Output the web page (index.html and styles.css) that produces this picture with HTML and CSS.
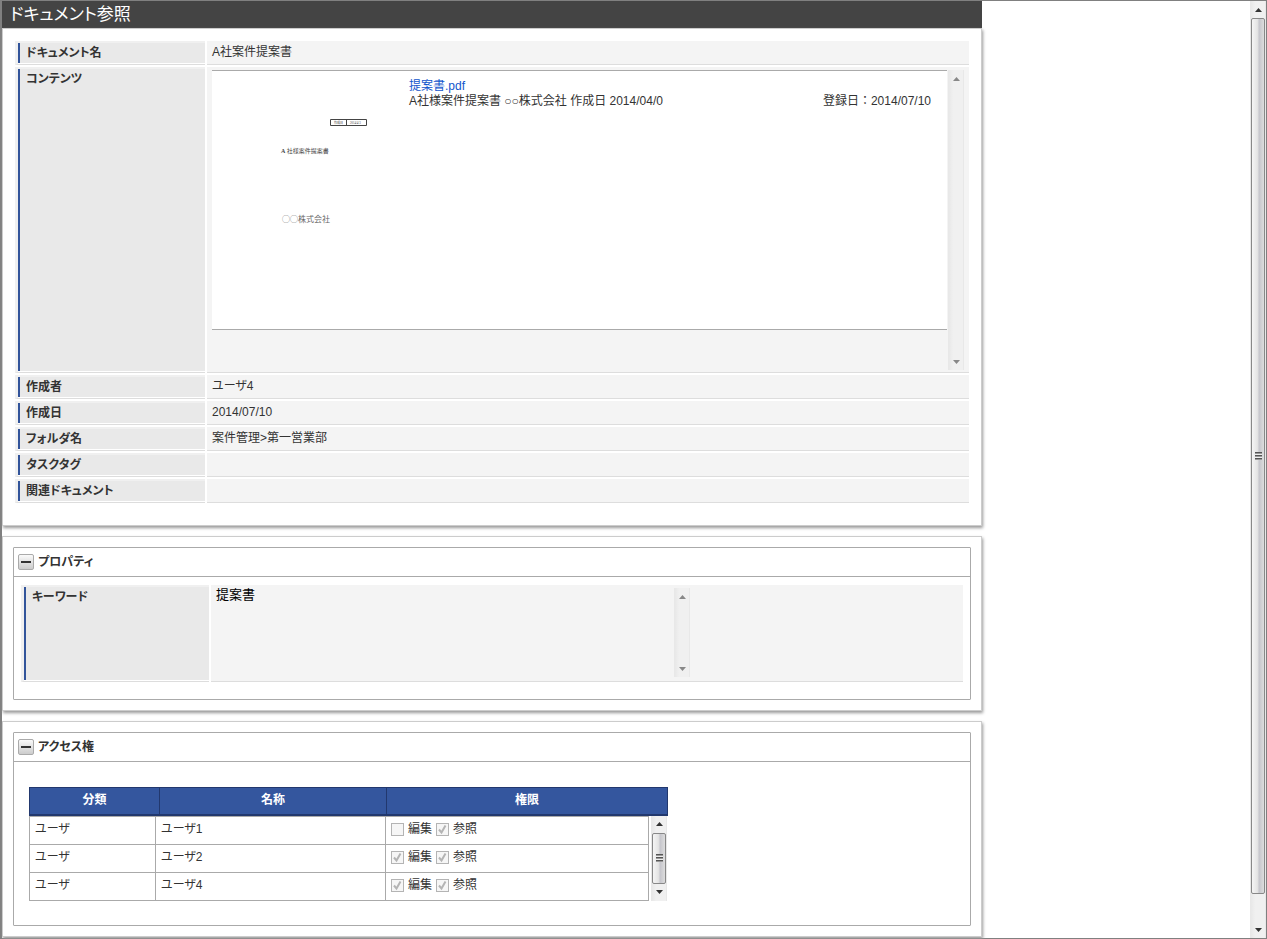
FILE: index.html
```
<!DOCTYPE html>
<html lang="ja">

<head>
    <meta charset="UTF-8">
    <meta name="viewport" content="width=device-width, initial-scale=1.0">
    <title>ドキュメント参照</title>
    <link rel="stylesheet" href="styles.css">
</head>

<body>
    <div class="window">
        <main class="page">
            <h1 class="page-title">ドキュメント参照</h1>

            <section class="card card-main">
                <table class="form-table">
                    <tr>
                        <th scope="row">ドキュメント名</th>
                        <td>A社案件提案書</td>
                    </tr>
                    <tr>
                        <th scope="row">コンテンツ</th>
                        <td class="pane-cell">
                            <div class="pane">
                                <div class="document">
                                    <svg class="thumb" viewBox="0 0 197 256" role="img" aria-label="提案書.pdf">
                                        <path d="M118.500 48.500h36v6h-36zM134.500 48.500v6" fill="none" stroke="#444" />
                                        <text x="122" y="53" font-size="3">作成日</text>
                                        <text x="138" y="53" font-size="3">2014/4/3</text>
                                        <text x="69" y="82" font-size="6"><tspan font-weight="bold">A</tspan> 社様案件提案書</text>
                                        <text class="thumb-company" x="70" y="151" font-size="8">◯◯株式会社</text>
                                    </svg>
                                    <div class="document-info">
                                        <a href="#">提案書.pdf</a>
                                        <div class="document-line">
                                            <span>A社様案件提案書 ○○株式会社 作成日 2014/04/0</span>
                                            <span class="document-date">登録日：2014/07/10</span>
                                        </div>
                                    </div>
                                </div>
                                <div class="scrollbar scrollbar-off">
                                    <button type="button" disabled aria-label="上へ"><svg viewBox="0 0 7 4"><path d="M3.500 0L7 4H0z" /></svg></button>
                                    <div class="track"></div>
                                    <button type="button" disabled aria-label="下へ"><svg viewBox="0 0 7 4"><path d="M0 0h7L3.500 4z" /></svg></button>
                                </div>
                            </div>
                        </td>
                    </tr>
                    <tr>
                        <th scope="row">作成者</th>
                        <td>ユーザ4</td>
                    </tr>
                    <tr>
                        <th scope="row">作成日</th>
                        <td>2014/07/10</td>
                    </tr>
                    <tr>
                        <th scope="row">フォルダ名</th>
                        <td>案件管理&gt;第一営業部</td>
                    </tr>
                    <tr>
                        <th scope="row">タスクタグ</th>
                        <td></td>
                    </tr>
                    <tr>
                        <th scope="row">関連ドキュメント</th>
                        <td></td>
                    </tr>
                </table>
            </section>

            <section class="card">
                <div class="panel">
                    <h2 class="panel-title">
                        <button type="button" class="toggle" aria-label="プロパティを閉じる"><svg viewBox="0 0 10 2"><path d="M0 0h10v2H0z" /></svg></button>
                        プロパティ
                    </h2>
                    <div class="panel-form">
                        <table class="form-table">
                            <tr>
                                <th scope="row"><label for="keyword">キーワード</label></th>
                                <td class="keyword-cell">
                                    <div class="keyword">
                                        <textarea id="keyword" readonly>提案書</textarea>
                                        <div class="scrollbar scrollbar-off">
                                            <button type="button" disabled aria-label="上へ"><svg viewBox="0 0 7 4"><path d="M3.500 0L7 4H0z" /></svg></button>
                                            <div class="track"></div>
                                            <button type="button" disabled aria-label="下へ"><svg viewBox="0 0 7 4"><path d="M0 0h7L3.500 4z" /></svg></button>
                                        </div>
                                    </div>
                                </td>
                            </tr>
                        </table>
                    </div>
                </div>
            </section>

            <section class="card">
                <div class="panel">
                    <h2 class="panel-title">
                        <button type="button" class="toggle" aria-label="アクセス権を閉じる"><svg viewBox="0 0 10 2"><path d="M0 0h10v2H0z" /></svg></button>
                        アクセス権
                    </h2>
                    <div class="access">
                        <table class="access-head">
                            <colgroup>
                                <col class="head-kind">
                                <col class="head-name">
                                <col>
                            </colgroup>
                            <tr>
                                <th>分類</th>
                                <th>名称</th>
                                <th>権限</th>
                            </tr>
                        </table>
                        <div class="access-scroll">
                            <table class="access-body">
                                <colgroup>
                                    <col class="body-kind">
                                    <col class="body-name">
                                    <col>
                                </colgroup>
                                <tr>
                                    <td>ユーザ</td>
                                    <td>ユーザ1</td>
                                    <td>
                                        <div class="rights">
                                            <label><input type="checkbox" disabled>編集</label>
                                            <label><input type="checkbox" checked disabled>参照</label>
                                        </div>
                                    </td>
                                </tr>
                                <tr>
                                    <td>ユーザ</td>
                                    <td>ユーザ2</td>
                                    <td>
                                        <div class="rights">
                                            <label><input type="checkbox" checked disabled>編集</label>
                                            <label><input type="checkbox" checked disabled>参照</label>
                                        </div>
                                    </td>
                                </tr>
                                <tr>
                                    <td>ユーザ</td>
                                    <td>ユーザ4</td>
                                    <td>
                                        <div class="rights">
                                            <label><input type="checkbox" checked disabled>編集</label>
                                            <label><input type="checkbox" checked disabled>参照</label>
                                        </div>
                                    </td>
                                </tr>
                            </table>
                            <div class="scrollbar">
                                <button type="button" aria-label="上へ"><svg viewBox="0 0 7 4"><path d="M3.500 0L7 4H0z" /></svg></button>
                                <div class="track"><div class="handle handle-full"><span class="grip"></span></div></div>
                                <button type="button" aria-label="下へ"><svg viewBox="0 0 7 4"><path d="M0 0h7L3.500 4z" /></svg></button>
                            </div>
                        </div>
                    </div>
                </div>
            </section>
        </main>

        <div class="scrollbar">
            <button type="button" aria-label="上へ"><svg viewBox="0 0 7 4"><path d="M3.500 0L7 4H0z" /></svg></button>
            <div class="track"><div class="handle"><span class="grip"></span></div></div>
            <button type="button" aria-label="下へ"><svg viewBox="0 0 7 4"><path d="M0 0h7L3.500 4z" /></svg></button>
        </div>
    </div>
</body>

</html>
```
FILE: styles.css
```
* {
    box-sizing: border-box;
}

body {
    margin: 0;
    background-color: #fff;
    color: #333;
    font-family: "Liberation Sans", "Noto Sans CJK JP", sans-serif;
    font-size: 12px;
    line-height: 15px;
    font-feature-settings: "palt";
}

button, input, textarea {
    font: inherit;
    font-feature-settings: inherit;
    margin: 0;
    padding: 0;
}

table {
    width: 100%;
}

/* window frame */
.window {
    display: flex;
    justify-content: space-between;
    min-height: 100vh;
    border: 1px solid #808080;
    border-left-width: 2px;
}

.page {
    flex: 1;
    min-width: 0;
    max-width: 980px;
}

.page-title {
    margin: 0;
    padding: 0 8px;
    background-color: #444;
    color: #fff;
    font-size: 17px;
    font-weight: normal;
    line-height: 27px;
}

.card {
    margin-bottom: 10px;
    padding: 10px;
    border: 1px solid #ccc;
    box-shadow: 1px 2px 3px #999;
}

.card:last-child {
    margin-bottom: 0;
}

.card-main {
    padding-bottom: 20px;
}

/* label / value rows */
.form-table {
    border-collapse: separate;
    border-spacing: 2px;
}

.form-table th {
    width: 190px;
    height: 24px;
    padding: 3px 8px 2px;
    border: 0 solid #f0f0f0;
    border-width: 2px 0 1px 3px;
    border-bottom-color: #ddd;
    background: linear-gradient(#32549a, #32549a) left / 2px 100% no-repeat #e9e9e9;
    background-clip: padding-box;
    box-shadow: inset 0 -1px #fff;
    text-align: left;
    vertical-align: top;
}

.form-table td {
    padding: 4px 5px;
    border-bottom: 1px solid #ddd;
    background-color: #f4f4f4;
    vertical-align: top;
}

.form-table .pane-cell {
    padding: 3px 5px 2px;
}

.pane {
    display: flex;
    align-items: flex-start;
    gap: 1px;
    height: 300px;
}

.document {
    display: flex;
    flex: 1;
    height: 260px;
    border: 1px solid #aaa;
    border-width: 1px 0;
    background-color: #fff;
}

.thumb {
    width: 197px;
    height: 256px;
    font-family: "Liberation Serif", "Noto Sans CJK JP", serif;
    fill: #444;
}

.thumb-company {
    font-family: "Noto Sans CJK JP", sans-serif;
    font-feature-settings: normal;
    fill: #666;
}

.document-info {
    flex: 1;
    padding: 8px 16px 0 0;
}

.document-info a {
    color: #15c;
    text-decoration: none;
}

.document-line {
    display: flex;
    justify-content: space-between;
}

.document-date {
    font-feature-settings: normal;
}

/* panels */
.panel {
    border: 1px solid #aaa;
    border-radius: 1px;
}

.panel-title {
    display: flex;
    align-items: center;
    gap: 4px;
    height: 29px;
    margin: 0;
    padding: 0 4px;
    border-bottom: 1px solid #aaa;
    font-size: 12px;
}

.toggle {
    display: flex;
    align-items: center;
    justify-content: center;
    width: 16px;
    height: 16px;
    border: 1px solid #aaa;
    border-radius: 2px;
    background: linear-gradient(#fafafa, #ccc);
}

.toggle svg {
    width: 10px;
    height: 2px;
    fill: #333;
}

.panel-form {
    padding: 6px 5px 15px;
}

.panel-form .form-table th {
    width: 188px;
}

.form-table .keyword-cell {
    padding: 3px 4px 4px;
}

.keyword {
    display: flex;
    width: 475px;
    max-width: 100%;
    height: 89px;
}

.keyword textarea {
    flex: 1;
    min-width: 0;
    padding: 0 1px;
    border: 0;
    outline: 0;
    resize: none;
    background: none;
    color: #000;
    font-size: 13px;
    line-height: 14px;
}

/* access rights */
.access {
    max-width: 670px;
    padding: 25px 16px 24px 15px;
}

.access-head, .access-body {
    table-layout: fixed;
    border-collapse: collapse;
}

.access-head th {
    height: 27px;
    padding: 0;
    border: 1px solid #22386e;
    border-bottom-width: 2px;
    background-color: #34569e;
    color: #fff;
}

.head-kind {
    width: 130px;
}

.head-name {
    width: 227px;
}

.body-kind {
    width: 126px;
}

.body-name {
    width: 230px;
}

.access-scroll {
    display: flex;
    gap: 2px;
    padding-right: 1px;
}

.access-body td {
    height: 28px;
    padding: 0 5px 2px;
    border: 1px solid #aaa;
}

.rights {
    display: flex;
    gap: 4px;
}

.rights label {
    display: flex;
    align-items: center;
    gap: 4px;
}

.rights input {
    width: 13px;
    height: 13px;
    appearance: none;
    border: 1px solid #b4b4b4;
    background: #f6f6f6 center / 11px 11px no-repeat;
}

.rights input:checked {
    background-image: url("data:image/svg+xml,%3Csvg xmlns='http://www.w3.org/2000/svg' viewBox='0 0 11 11'%3E%3Cpath d='M2 5.500L4.500 8.500L8.500 1.500' fill='none' stroke='%23b4b4b4' stroke-width='2'/%3E%3C/svg%3E");
}

/* scroll bars */
.scrollbar {
    display: flex;
    flex: none;
    flex-direction: column;
    align-self: stretch;
    width: 16px;
    border: 1px solid #e8e8e8;
    border-width: 0 1px;
    background: linear-gradient(90deg, #e8e8e8, #f0f0f0 30%, #f0f0f0);
}

.scrollbar button {
    display: flex;
    flex: none;
    align-items: center;
    justify-content: center;
    height: 17px;
    border: 0;
    background: none;
}

.scrollbar button svg {
    width: 7px;
    height: 4px;
    fill: #333;
}

.scrollbar-off button svg {
    fill: #888;
}

.track {
    flex: 1;
    min-height: 0;
}

.handle {
    display: flex;
    align-items: center;
    justify-content: center;
    height: 97%;
    border: 1px solid #888;
    border-radius: 2px;
    background: linear-gradient(90deg, #f5f5f5, #e4e4e4 45%, #c6c6cc 60%, #ddd);
}

.handle-full {
    height: 100%;
}

.grip {
    width: 7px;
    height: 8px;
    background: repeating-linear-gradient(#555 0, #555 1px, #999 1px, #999 2px, #eee 2px, #eee 3px);
}
```
